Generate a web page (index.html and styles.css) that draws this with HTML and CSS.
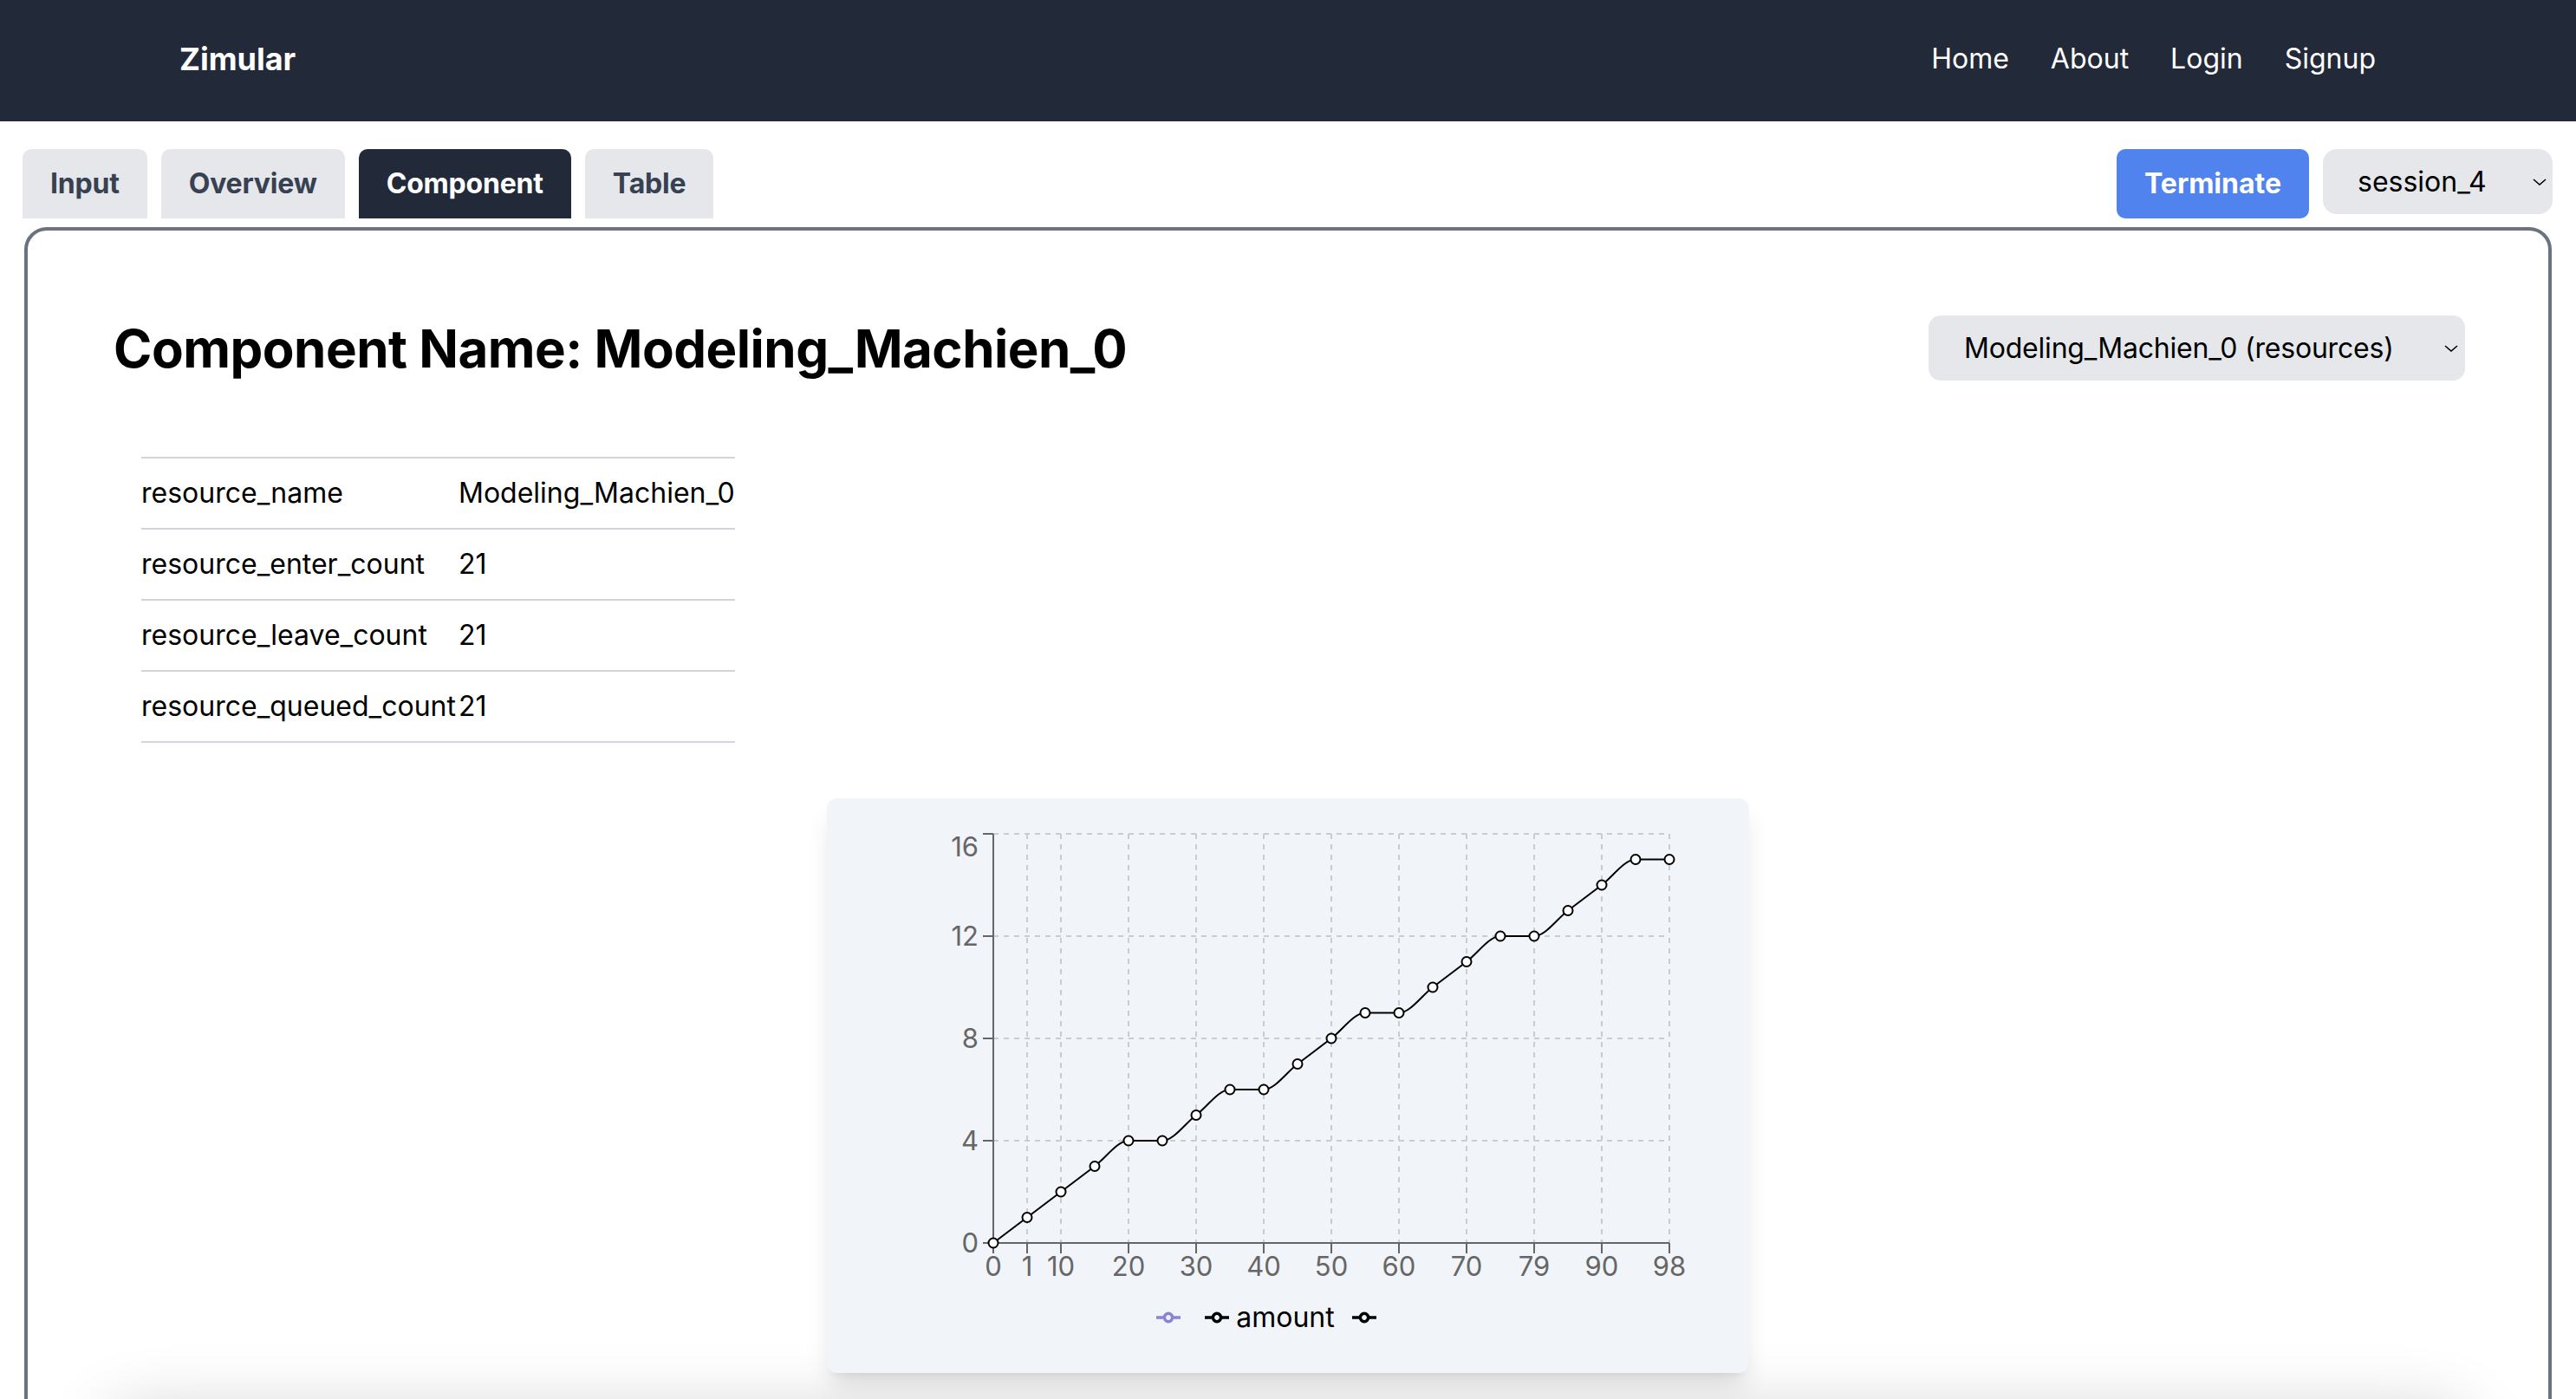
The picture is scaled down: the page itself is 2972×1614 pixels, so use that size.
FILE: index.html
```html
<!DOCTYPE html>
<html lang="en">
<head>
<meta charset="utf-8">
<title>Zimular</title>
<link rel="stylesheet" href="styles.css">
</head>
<body>
<nav class="navbar">
  <a class="brand">Zimular</a>
  <ul class="nav-links">
    <li><a>Home</a></li>
    <li><a>About</a></li>
    <li><a>Login</a></li>
    <li><a>Signup</a></li>
  </ul>
</nav>

<div class="toolbar">
  <div class="tabs">
    <button class="tab">Input</button>
    <button class="tab">Overview</button>
    <button class="tab active">Component</button>
    <button class="tab">Table</button>
  </div>
  <div class="actions">
    <button class="btn-terminate">Terminate</button>
    <div class="select session-select">
      <span>session_4</span>
      <svg class="chevron" viewBox="0 0 16 8" width="16" height="8"><path d="M1 1 L8 7 L15 1" fill="none" stroke="#000" stroke-width="1.6"/></svg>
    </div>
  </div>
</div>

<main class="panel">
  <div class="panel-head">
    <h1 class="title">Component Name: Modeling_Machien_0</h1>
    <div class="select comp-select">
      <span>Modeling_Machien_0 (resources)</span>
      <svg class="chevron" viewBox="0 0 16 8" width="16" height="8"><path d="M1 1 L8 7 L15 1" fill="none" stroke="#000" stroke-width="1.6"/></svg>
    </div>
  </div>

  <table class="props">
    <tbody>
      <tr><td class="key">resource_name</td><td class="val">Modeling_Machien_0</td></tr>
      <tr><td class="key">resource_enter_count</td><td class="val">21</td></tr>
      <tr><td class="key">resource_leave_count</td><td class="val">21</td></tr>
      <tr><td class="key">resource_queued_count</td><td class="val">21</td></tr>
    </tbody>
  </table>

  <div class="chart-card">
    <svg class="chart" width="1064" height="570" viewBox="0 0 1064 570">
      <g class="grid">
        <line x1="192" y1="41" x2="972" y2="41"/>
        <line x1="192" y1="159" x2="972" y2="159"/>
        <line x1="192" y1="277" x2="972" y2="277"/>
        <line x1="192" y1="395" x2="972" y2="395"/>
        <line x1="231" y1="41" x2="231" y2="513"/>
        <line x1="270" y1="41" x2="270" y2="513"/>
        <line x1="348" y1="41" x2="348" y2="513"/>
        <line x1="426" y1="41" x2="426" y2="513"/>
        <line x1="504" y1="41" x2="504" y2="513"/>
        <line x1="582" y1="41" x2="582" y2="513"/>
        <line x1="660" y1="41" x2="660" y2="513"/>
        <line x1="738" y1="41" x2="738" y2="513"/>
        <line x1="816" y1="41" x2="816" y2="513"/>
        <line x1="894" y1="41" x2="894" y2="513"/>
        <line x1="972" y1="41" x2="972" y2="513"/>
      </g>
      <g class="axis">
        <line x1="192" y1="41" x2="192" y2="513"/>
        <line x1="192" y1="513" x2="972" y2="513"/>
        <line x1="180" y1="41" x2="192" y2="41"/>
        <line x1="180" y1="159" x2="192" y2="159"/>
        <line x1="180" y1="277" x2="192" y2="277"/>
        <line x1="180" y1="395" x2="192" y2="395"/>
        <line x1="180" y1="513" x2="192" y2="513"/>
        <line x1="192" y1="513" x2="192" y2="525"/>
        <line x1="231" y1="513" x2="231" y2="525"/>
        <line x1="270" y1="513" x2="270" y2="525"/>
        <line x1="348" y1="513" x2="348" y2="525"/>
        <line x1="426" y1="513" x2="426" y2="525"/>
        <line x1="504" y1="513" x2="504" y2="525"/>
        <line x1="582" y1="513" x2="582" y2="525"/>
        <line x1="660" y1="513" x2="660" y2="525"/>
        <line x1="738" y1="513" x2="738" y2="525"/>
        <line x1="816" y1="513" x2="816" y2="525"/>
        <line x1="894" y1="513" x2="894" y2="525"/>
        <line x1="972" y1="513" x2="972" y2="525"/>
      </g>
      <g class="y-labels">
        <text x="175" y="56" dy="0.355em">16</text>
        <text x="175" y="159" dy="0.355em">12</text>
        <text x="175" y="277" dy="0.355em">8</text>
        <text x="175" y="395" dy="0.355em">4</text>
        <text x="175" y="513" dy="0.355em">0</text>
      </g>
      <g class="x-labels">
        <text x="192" y="551">0</text>
        <text x="231" y="551">1</text>
        <text x="270" y="551">10</text>
        <text x="348" y="551">20</text>
        <text x="426" y="551">30</text>
        <text x="504" y="551">40</text>
        <text x="582" y="551">50</text>
        <text x="660" y="551">60</text>
        <text x="738" y="551">70</text>
        <text x="816" y="551">79</text>
        <text x="894" y="551">90</text>
        <text x="972" y="551">98</text>
      </g>
      <path class="series" d="M192,513 C205,503.17 218,493.33 231,483.5 C244,473.67 257,463.83 270,454 C283,444.17 296,434.33 309,424.5 C322,414.67 335,395 348,395 C361,395 374,395 387,395 C400,395 413,375.33 426,365.5 C439,355.67 452,336 465,336 C478,336 491,336 504,336 C517,336 530,316.33 543,306.5 C556,296.67 569,286.83 582,277 C595,267.17 608,247.5 621,247.5 C634,247.5 647,247.5 660,247.5 C673,247.5 686,227.83 699,218 C712,208.17 725,198.33 738,188.5 C751,178.67 764,159 777,159 C790,159 803,159 816,159 C829,159 842,139.33 855,129.5 C868,119.67 881,109.83 894,100 C907,90.17 920,70.5 933,70.5 C946,70.5 959,70.5 972,70.5"/>
      <g class="dots">
        <circle cx="192" cy="513" r="5.5"/>
        <circle cx="231" cy="483.5" r="5.5"/>
        <circle cx="270" cy="454" r="5.5"/>
        <circle cx="309" cy="424.5" r="5.5"/>
        <circle cx="348" cy="395" r="5.5"/>
        <circle cx="387" cy="395" r="5.5"/>
        <circle cx="426" cy="365.5" r="5.5"/>
        <circle cx="465" cy="336" r="5.5"/>
        <circle cx="504" cy="336" r="5.5"/>
        <circle cx="543" cy="306.5" r="5.5"/>
        <circle cx="582" cy="277" r="5.5"/>
        <circle cx="621" cy="247.5" r="5.5"/>
        <circle cx="660" cy="247.5" r="5.5"/>
        <circle cx="699" cy="218" r="5.5"/>
        <circle cx="738" cy="188.5" r="5.5"/>
        <circle cx="777" cy="159" r="5.5"/>
        <circle cx="816" cy="159" r="5.5"/>
        <circle cx="855" cy="129.5" r="5.5"/>
        <circle cx="894" cy="100" r="5.5"/>
        <circle cx="933" cy="70.5" r="5.5"/>
        <circle cx="972" cy="70.5" r="5.5"/>
      </g>
    </svg>
    <ul class="legend">
      <li class="legend-item">
        <svg class="legend-icon" viewBox="0 0 32 32" width="28" height="28"><path class="icon-purple" d="M0,16h10.67A5.33,5.33,0,1,1,21.33,16H32M21.33,16A5.33,5.33,0,1,1,10.67,16"/></svg>
      </li>
      <li class="legend-item">
        <svg class="legend-icon" viewBox="0 0 32 32" width="28" height="28"><path class="icon-black" d="M0,16h10.67A5.33,5.33,0,1,1,21.33,16H32M21.33,16A5.33,5.33,0,1,1,10.67,16"/></svg>
        <span class="legend-text">amount</span>
      </li>
      <li class="legend-item">
        <svg class="legend-icon" viewBox="0 0 32 32" width="28" height="28"><path class="icon-black" d="M0,16h10.67A5.33,5.33,0,1,1,21.33,16H32M21.33,16A5.33,5.33,0,1,1,10.67,16"/></svg>
      </li>
    </ul>
  </div>

  <div class="next-card"></div>
</main>
</body>
</html>
```

FILE: styles.css
```css
* { box-sizing: border-box; }

html, body {
  margin: 0;
  padding: 0;
}

body {
  font-family: Inter, "Noto Sans", "Liberation Sans", sans-serif;
  background: #ffffff;
  color: #000000;
  overflow: hidden;
}

/* ---------- navbar ---------- */
.navbar {
  height: 140px;
  background: #222938;
  display: flex;
  align-items: center;
  justify-content: space-between;
  padding: 0 207px 4px 207px;
}

.brand {
  color: #ffffff;
  font-weight: 700;
  font-size: 36px;
  line-height: 52px;
}

.nav-links {
  display: flex;
  list-style: none;
  margin: 0;
  padding: 0;
}

.nav-links a {
  display: block;
  padding: 0 24px;
  color: #ffffff;
  font-size: 32px;
  line-height: 48px;
}

/* ---------- toolbar ---------- */
.toolbar {
  display: flex;
  justify-content: space-between;
  align-items: flex-start;
  padding: 32px 27px 0 26px;
}

.tabs {
  display: flex;
  gap: 16px;
}

.tab {
  height: 80px;
  padding: 0 32px;
  border: 0;
  border-radius: 10px 10px 0 0;
  background: #e5e7eb;
  color: #374151;
  font-family: inherit;
  font-weight: 700;
  font-size: 32px;
  line-height: 48px;
  letter-spacing: -0.2px;
}

.tab.active {
  background: #222938;
  color: #ffffff;
}

.actions {
  display: flex;
  align-items: flex-start;
  gap: 16px;
}

.btn-terminate {
  height: 80px;
  padding: 0 32px;
  border: 0;
  border-radius: 10px;
  background: #5083ed;
  color: #ffffff;
  font-family: inherit;
  font-weight: 700;
  font-size: 32px;
  line-height: 48px;
}

.select {
  display: flex;
  align-items: center;
  justify-content: space-between;
  background: #e5e7eb;
  color: #000000;
  font-size: 32px;
  line-height: 48px;
}

.session-select {
  width: 265px;
  height: 75px;
  padding: 0 7px 0 40px;
  border-radius: 16px;
}

.chevron {
  display: block;
  flex: none;
}

/* ---------- panel ---------- */
.panel {
  margin: 10px 28px 0 28px;
  border: 4px solid #6b7280;
  border-radius: 26px;
  padding: 98px 96px 0 96px;
  min-height: 1500px;
}

.panel-head {
  display: flex;
  align-items: center;
  justify-content: space-between;
}

.title {
  margin: 0 0 0 3px;
  font-weight: 700;
  font-size: 60px;
  line-height: 72px;
  letter-spacing: -0.5px;
}

.comp-select {
  width: 619px;
  height: 75px;
  padding: 0 8px 0 41px;
  border-radius: 14px;
  letter-spacing: -0.2px;
}

/* ---------- table ---------- */
.props {
  margin: 88px 0 0 35px;
  border-collapse: separate;
  border-spacing: 0;
  font-size: 32px;
  line-height: 44px;
}

.props td {
  box-sizing: content-box;
  height: 80px;
  padding: 0;
  border-top: 2px solid #d1d5db;
  white-space: nowrap;
  vertical-align: middle;
}

.props tr:last-child td {
  border-bottom: 2px solid #d1d5db;
}

.props .key {
  width: 366px;
}

.props .val {
  width: 316px;
}

/* ---------- chart ---------- */
.chart-card {
  width: 1064px;
  height: 663px;
  margin: 64px auto 0 auto;
  background: #f1f4f9;
  border-radius: 12px;
  box-shadow: 0 20px 30px -6px rgba(0, 0, 0, 0.12), 0 8px 12px -8px rgba(0, 0, 0, 0.1);
  position: relative;
  z-index: 1;
}

.chart {
  display: block;
}

.grid line {
  stroke: #cccccc;
  stroke-width: 2;
  stroke-dasharray: 6 6;
}

.axis line {
  stroke: #666666;
  stroke-width: 2;
}

.y-labels text,
.x-labels text {
  fill: #666666;
  font-size: 31px;
  font-family: Inter, "Noto Sans", sans-serif;
}

.y-labels text {
  text-anchor: end;
}

.x-labels text {
  text-anchor: middle;
}

.series {
  fill: none;
  stroke: #000000;
  stroke-width: 2;
}

.dots circle {
  fill: #ffffff;
  stroke: #000000;
  stroke-width: 2;
}

.legend {
  display: flex;
  justify-content: center;
  align-items: center;
  list-style: none;
  margin: 0;
  padding: 0 22px 0 0;
  height: 58px;
}

.legend-item {
  display: flex;
  align-items: center;
  margin-right: 20px;
}

.legend-icon {
  display: block;
  margin-right: 8px;
}

.legend-icon path {
  fill: none;
  stroke-width: 4;
}

.icon-purple { stroke: #8884d8; }
.icon-black { stroke: #000000; }

.legend-text {
  font-size: 32px;
  line-height: 40px;
  color: #000000;
}

/* shadow of the next section just below the fold */
.next-card {
  height: 400px;
  margin-top: 46px;
  border-radius: 24px;
  background: #ffffff;
  box-shadow: 0 0 80px rgba(0, 0, 0, 0.2);
}
```
